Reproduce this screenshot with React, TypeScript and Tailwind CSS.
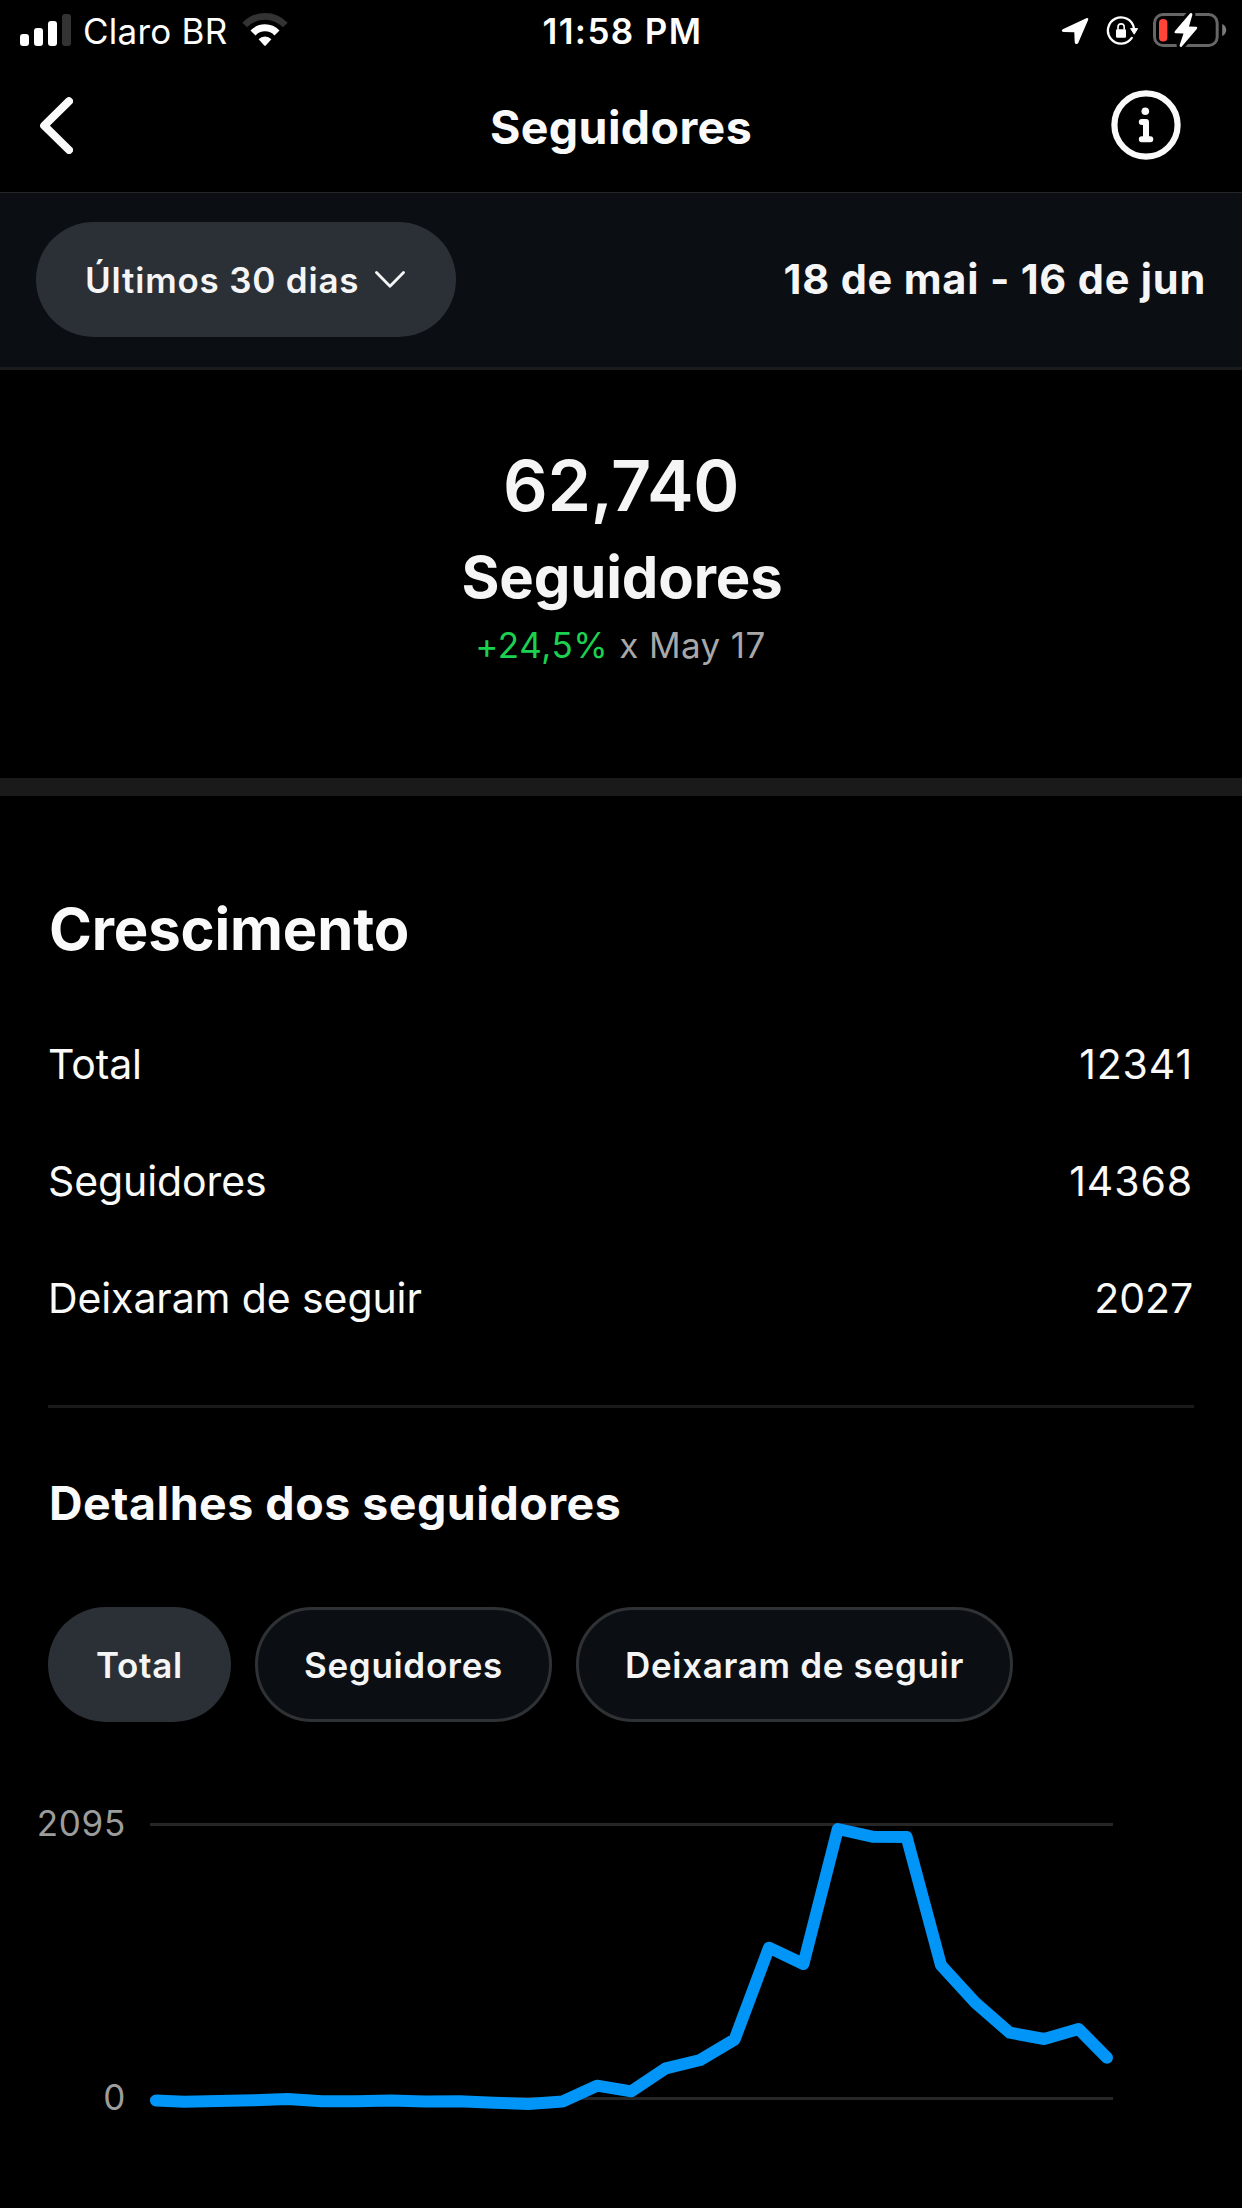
function SignalBars() {
  return (
    <div className="flex h-8 items-end gap-[5px]">
      <span className="h-3 w-[9px] rounded-[3px] bg-white" />
      <span className="h-[18px] w-[9px] rounded-[3px] bg-white" />
      <span className="h-[25px] w-[9px] rounded-[3px] bg-white" />
      <span className="h-8 w-[9px] rounded-[3px] bg-[#333333]" />
    </div>
  );
}

function WifiIcon() {
  return (
    <svg width="46" height="34" viewBox="0 0 46 34" fill="none">
      <path d="M2.7 12.1A28 28 0 0 1 43.3 12.1" stroke="#333333" strokeWidth="6.6" />
      <path d="M11 20A16.6 16.6 0 0 1 35 20" stroke="#fff" strokeWidth="7" />
      <path d="M16.6 26.3A8.7 8.7 0 0 1 29.4 26.3L24 32.3Q23 33.4 22 32.3Z" fill="#fff" />
    </svg>
  );
}

function LocationIcon() {
  return (
    <svg width="28" height="28" viewBox="0 0 28 28" fill="#fff">
      <path d="M25.8 1.1Q27.8.8 27.2 2.8L17.3 25.8Q16.6 27.3 15.2 27Q13.7 26.8 13.7 25L13.3 15.2L2.5 14.9Q.8 14.7.8 13.4Q.8 12.6 2.3 11.9Z" />
    </svg>
  );
}

function RotationLockIcon() {
  return (
    <svg width="33" height="30" viewBox="0 0 33 30" fill="none">
      <path d="M25.8 21.9A13.1 13.1 0 1 1 27.9 12.2" stroke="#fff" strokeWidth="2.3" strokeLinecap="round" />
      <path d="M24.6 12.6H31.6L28.2 18.2Z" fill="#fff" stroke="#fff" strokeWidth="1" strokeLinejoin="round" />
      <rect x="10" y="13.3" width="10" height="8.4" rx="1.2" fill="#fff" />
      <path d="M12 13.8V11A3.1 3.1 0 0 1 18.2 11V13.8" stroke="#fff" strokeWidth="1.6" />
    </svg>
  );
}

const BOLT =
  "M37.2 1.2L21.8 19.2Q20.8 21.2 22.5 21.3L30.5 21.5L26.6 33.2Q26.6 35.6 28.6 34.8L43.8 17Q45 15 43.2 14.8L36 14.6L39.4 2.8Q39.3.2 37.2 1.2Z";

function BatteryIcon() {
  return (
    <svg width="74" height="36" viewBox="0 0 74 36" fill="none">
      <rect x="1.5" y="2.5" width="62.7" height="31" rx="8.5" stroke="#666666" strokeWidth="3" />
      <path d="M69.2 12C74.6 14 74.6 22 69.2 24Z" fill="#7a7a7a" />
      <rect x="6" y="7" width="8.4" height="22.4" rx="4" fill="#ff453a" />
      <path d={BOLT} stroke="#000" strokeWidth="6" />
      <path d={BOLT} fill="#fff" />
    </svg>
  );
}

function BackIcon() {
  return (
    <svg width="33" height="57" viewBox="0 0 33 57" fill="none">
      <path d="M29 4.2L4.2 28.7L29 53" stroke="#fafafa" strokeWidth="8" strokeLinecap="round" strokeLinejoin="round" />
    </svg>
  );
}

function InfoIcon() {
  return (
    <svg width="70" height="70" viewBox="0 0 70 70" fill="none">
      <circle cx="35" cy="35" r="31.6" stroke="#fafafa" strokeWidth="6.2" />
      <circle cx="34.3" cy="21.3" r="3.8" fill="#fafafa" />
      <path d="M30.8 32H35V49.2M30.8 49.2H39.3" stroke="#fafafa" strokeWidth="6" strokeLinecap="round" strokeLinejoin="round" />
    </svg>
  );
}

function ChevronDown() {
  return (
    <svg width="30" height="17" viewBox="0 0 30 17" fill="none">
      <path d="M1.5 1.5L15 15.2L28.5 1.5" stroke="#f5f5f5" strokeWidth="2.8" strokeLinecap="round" strokeLinejoin="round" />
    </svg>
  );
}

function GrowthRow({ label, value, spacing = "tracking-[0.9px]" }: { label: string; value: string; spacing?: string }) {
  return (
    <div className="flex h-[117px] items-center justify-between pr-[1px] text-[41px] text-[#fafafa]">
      <span className="tracking-[-0.1px]">{label}</span>
      <span className={spacing}>{value}</span>
    </div>
  );
}

const SERIES: [number, number][] = [
  [6, 297.5], [34.2, 298.8], [68.6, 298], [103, 297.3], [137.4, 296], [171.8, 298.3],
  [206.2, 298.3], [240.6, 297.5], [275, 298.5], [309.4, 298.2], [343.8, 299.8], [378.2, 301],
  [412.6, 298.5], [447, 282.7], [481.4, 288.3], [515.8, 265.3], [550.2, 257], [584.6, 236.5],
  [619, 144.7], [653.4, 161], [687.8, 26], [722.2, 33.7], [756.6, 34], [791, 162.3],
  [825.4, 199.7], [859.8, 229.7], [894.2, 236], [928.6, 226], [957, 254.7],
];

function Chart() {
  return (
    <div className="mt-[81px] flex h-[314px]">
      <div className="flex w-[150px] flex-col justify-between pr-6 text-right text-[35px] leading-[40px] tracking-[0.7px] text-[#9c9c9c]">
        <span>2095</span>
        <span>0</span>
      </div>
      <svg width="963" height="314" viewBox="0 0 963 314" fill="none">
        <path d="M0 21.5H963M0 295.5H963" stroke="#262626" strokeWidth="3" />
        <polyline
          points={SERIES.map((p) => p.join(",")).join(" ")}
          stroke="#0095f6"
          strokeWidth="12"
          strokeLinecap="round"
          strokeLinejoin="round"
        />
      </svg>
    </div>
  );
}

export default function App() {
  return (
    <div className="h-[2208px] w-[1242px] overflow-hidden bg-black font-['Inter',sans-serif] text-[#f5f5f5]">
      <div className="grid h-[62px] grid-cols-[1fr_auto_1fr] items-center pr-[15px] pl-5 text-[35px] text-white">
        <div className="flex items-center">
          <div className="-mt-[2px]">
            <SignalBars />
          </div>
          <span className="ml-3 tracking-[0.24px]">Claro BR</span>
          <div className="-mt-[3px] ml-[15px]">
            <WifiIcon />
          </div>
        </div>
        <span className="-ml-[2px] font-semibold tracking-[1.4px]">11:58 PM</span>
        <div className="flex items-center justify-end">
          <LocationIcon />
          <div className="ml-[17px]">
            <RotationLockIcon />
          </div>
          <div className="-mt-[2px] ml-[14px]">
            <BatteryIcon />
          </div>
        </div>
      </div>

      <header className="grid h-[131px] grid-cols-[1fr_auto_1fr] items-center border-b border-[#262626] px-10 text-[#fafafa]">
        <div className="-mt-[3px]">
          <BackIcon />
        </div>
        <h1 className="pt-[1px] text-[46.5px] font-bold tracking-[0.37px]">Seguidores</h1>
        <div className="-mt-1 flex justify-end pr-[21px]">
          <InfoIcon />
        </div>
      </header>

      <div className="flex h-[177px] items-center justify-between border-b-[3px] border-[#1a1b1c] bg-[#0b0e13] pr-[36px] pl-9">
        <button className="-mt-[2px] flex h-[115px] w-[420px] items-center gap-4 rounded-full bg-[#2b3036] pl-[49px] text-[35px] font-semibold tracking-[0.8px]">
          <span className="pt-[2px]">Últimos 30 dias</span>
          <ChevronDown />
        </button>
        <span className="-mt-[2px] text-[41.5px] font-bold tracking-[0.78px]">18 de mai - 16 de jun</span>
      </div>

      <section className="flex h-[408px] flex-col items-center pt-[73px]">
        <span className="text-[70px] leading-[85px] font-semibold tracking-[-0.4px]">62,740</span>
        <span className="pl-[2px] text-[58px] leading-[98px] font-bold tracking-[-0.14px]">Seguidores</span>
        <div className="flex gap-[11px] pr-[1px] text-[35px] leading-[38px]">
          <span className="tracking-[0.59px] text-[#1cd14f]">+24,5%</span>
          <span className="tracking-[0.4px] text-[#a8a8a8]">x May 17</span>
        </div>
      </section>

      <div className="h-[18px] bg-[#1a1a1a]" />

      <section className="px-12 pt-[98px]">
        <h2 className="pl-[1px] text-[58px] leading-[70px] font-bold tracking-[-0.16px] text-[#fafafa]">Crescimento</h2>
        <div className="mt-[42px]">
          <GrowthRow label="Total" value="12341" />
          <GrowthRow label="Seguidores" value="14368" />
          <GrowthRow label="Deixaram de seguir" value="2027" spacing="tracking-[-0.1px]" />
        </div>
        <div className="mt-12 h-[3px] bg-[#1a1a1a]" />
        <h3 className="mt-[66px] pl-[1px] text-[46.5px] leading-[58px] font-bold tracking-[0.5px] text-[#fafafa]">
          Detalhes dos seguidores
        </h3>
        <div className="mt-[75px] flex gap-6 text-[35px] font-semibold tracking-[0.68px]">
          <button className="h-[115px] w-[183px] rounded-full bg-[#2b3036] pt-[2px]">Total</button>
          <button className="h-[115px] w-[297px] rounded-full border-[3px] border-[#2f3235] bg-[#0b0e13] pt-[2px]">
            Seguidores
          </button>
          <button className="h-[115px] w-[437px] rounded-full border-[3px] border-[#2f3235] bg-[#0b0e13] pt-[2px]">
            Deixaram de seguir
          </button>
        </div>
      </section>

      <Chart />
    </div>
  );
}
